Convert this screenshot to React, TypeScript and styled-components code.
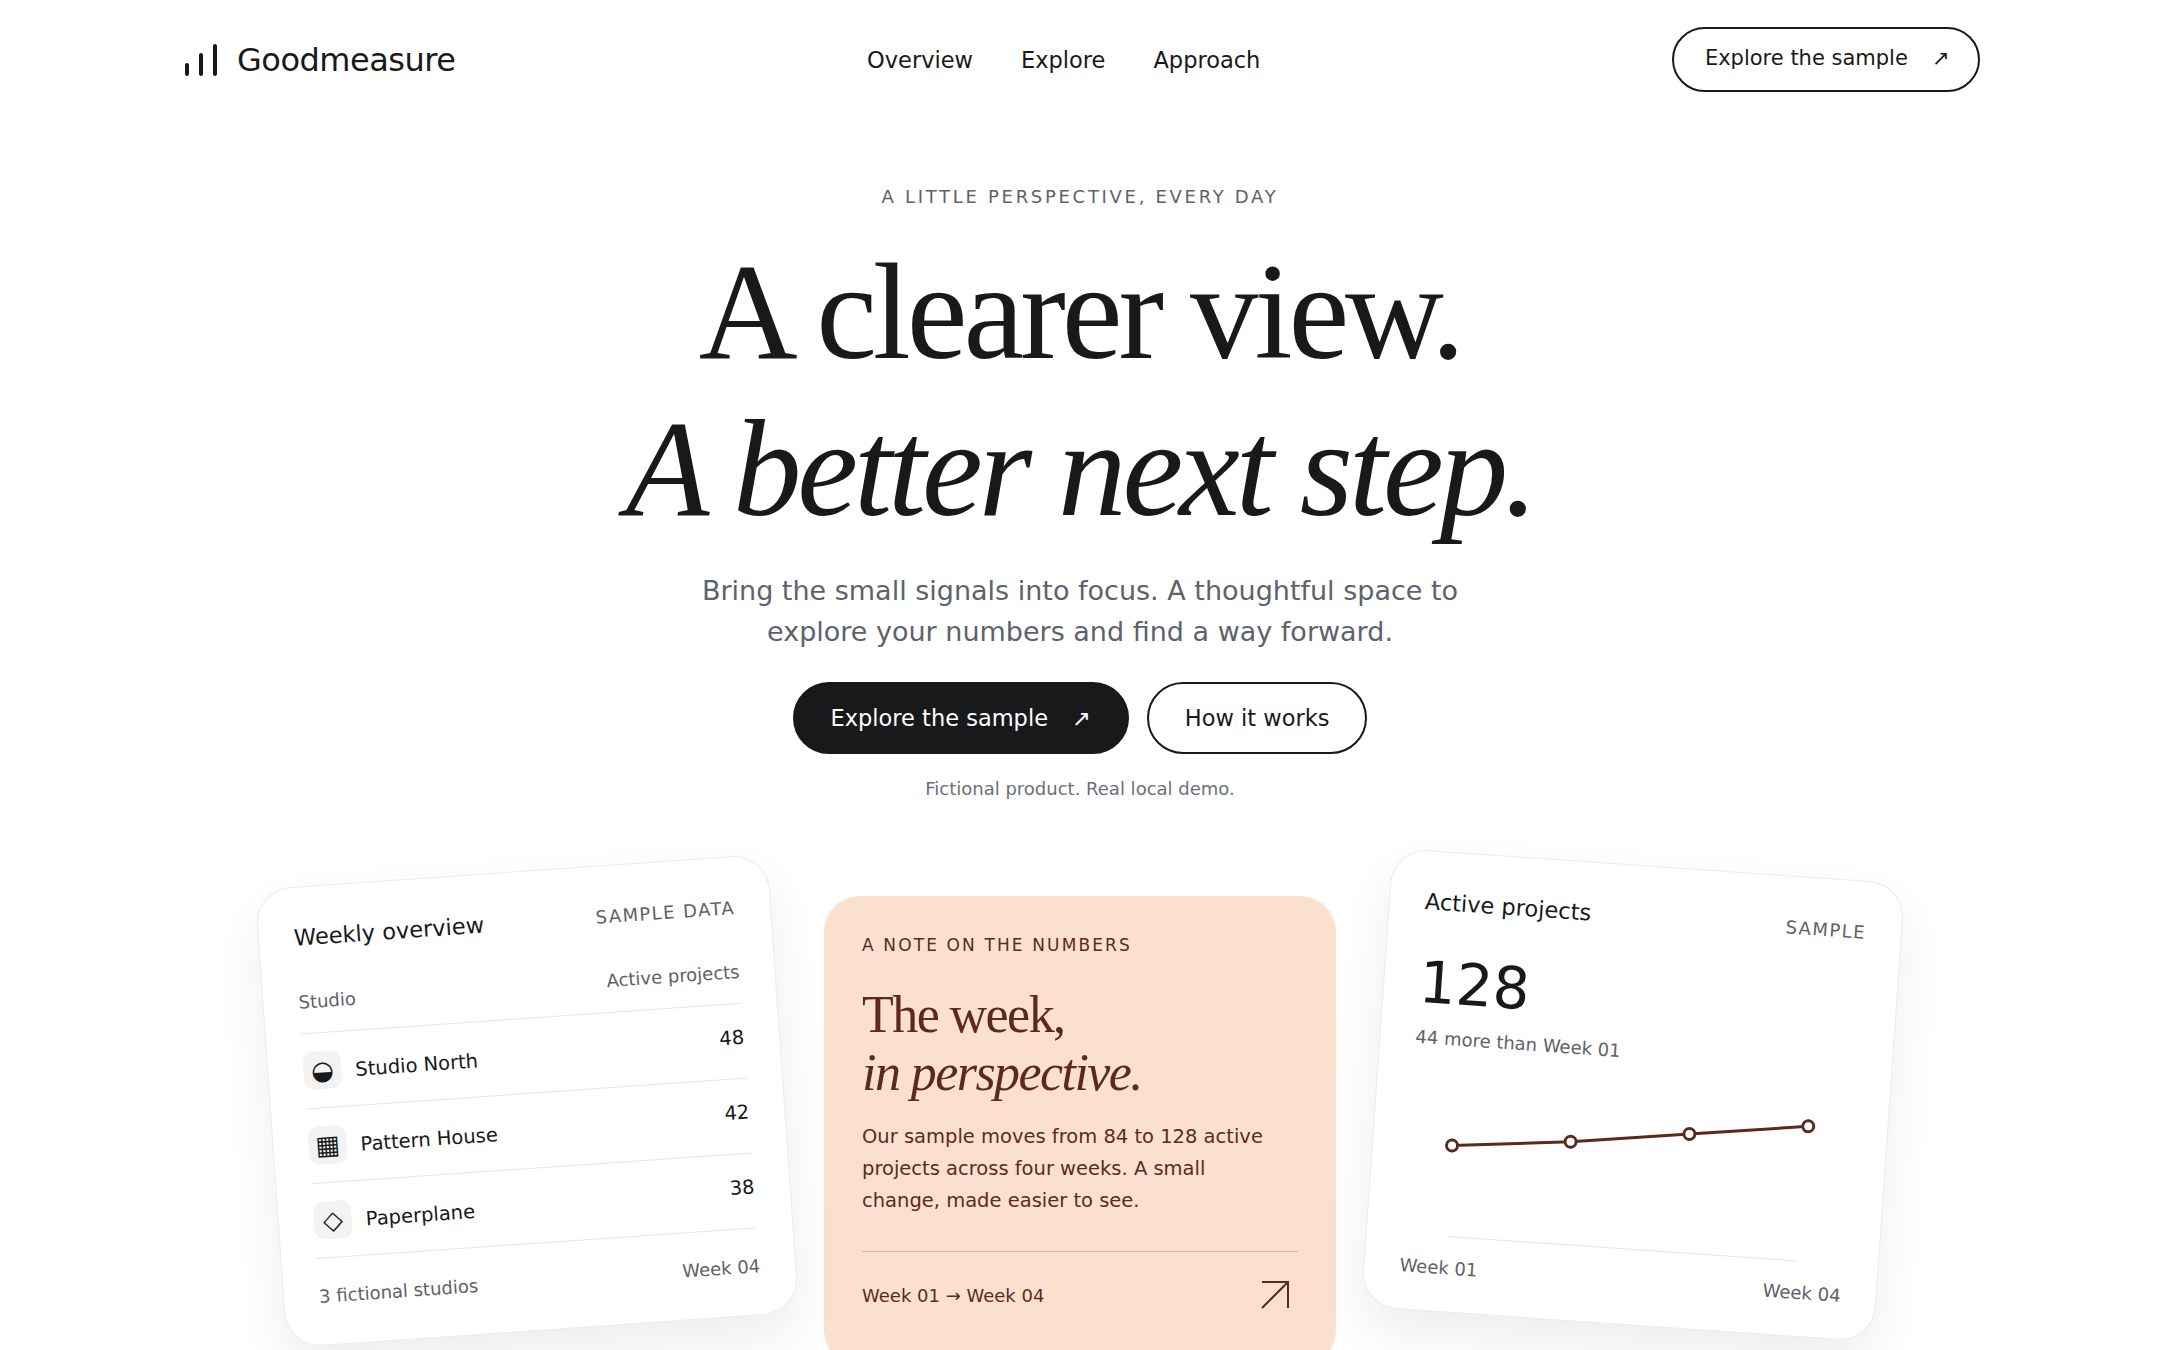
import React from 'react';
import styled, { createGlobalStyle } from 'styled-components';

const GlobalStyle = createGlobalStyle`
  html, body {
    margin: 0;
    padding: 0;
    background: #fff;
    color: #18191b;
    font-family: "DejaVu Sans", sans-serif;
  }
  * {
    box-sizing: border-box;
  }
`;

const Page = styled.div`
  height: 1350px;
  overflow: hidden;
`;

const Header = styled.header`
  display: flex;
  justify-content: space-between;
  align-items: center;
  height: 119px;
  padding: 0 180px 0 184px;
`;

const Brand = styled.div`
  display: flex;
  align-items: center;
  gap: 19px;
  font-size: 32px;
  letter-spacing: -0.015em;
`;

const Nav = styled.nav`
  display: flex;
  gap: 48px;
  font-size: 22.5px;
`;

const NavLink = styled.a`
  color: #18191b;
`;

const PillButton = styled.a<{ $dark?: boolean; $small?: boolean }>`
  display: inline-flex;
  align-items: center;
  gap: 24px;
  height: ${(p) => (p.$small ? '65px' : '72px')};
  padding: ${(p) => (p.$small ? '0 28.5px 3px 31px' : '0 36px')};
  border: 2px solid #18191b;
  border-radius: 999px;
  font-size: ${(p) => (p.$small ? '21px' : '22.5px')};
  background: ${(p) => (p.$dark ? '#18191b' : '#fff')};
  color: ${(p) => (p.$dark ? '#fff' : '#18191b')};
`;

const Hero = styled.section`
  display: flex;
  flex-direction: column;
  align-items: center;
  text-align: center;
`;

const Eyebrow = styled.p`
  margin: 66px 0 0;
  font-size: 18px;
  line-height: 24px;
  letter-spacing: 0.15em;
  color: #5d626c;
`;

const Title = styled.h1`
  margin: 25px 0 0;
  font-family: "Liberation Serif", serif;
  font-weight: 400;
  font-size: 137px;
  line-height: 157px;
  letter-spacing: -0.03em;
`;

const TitleLine = styled.span<{ $italic?: boolean }>`
  display: block;
  font-style: ${(p) => (p.$italic ? 'italic' : 'normal')};
`;

const Lead = styled.p`
  margin: 22px 0 0;
  width: 800px;
  font-size: 27px;
  line-height: 41px;
  color: #5d626c;
`;

const ButtonRow = styled.div`
  display: flex;
  gap: 18px;
  margin-top: 30px;
`;

const Disclaimer = styled.p`
  margin: 23px 0 0;
  font-size: 18px;
  line-height: 24px;
  color: #6b707a;
`;

const Cards = styled.section`
  display: grid;
  grid-template-columns: repeat(3, 512px);
  justify-content: center;
  gap: 41px;
  margin-top: 95px;
`;

const Card = styled.article<{ $tilt: number; $lift: number }>`
  height: 460px;
  margin: 0 -1px;
  padding: 37px 35px;
  background: #fff;
  border: 1px solid #ececec;
  border-radius: 36px;
  box-shadow: 0 24px 50px rgba(20, 20, 30, 0.07);
  transform: translateY(${(p) => p.$lift}px) rotate(${(p) => p.$tilt}deg);
`;

const CardHead = styled.div`
  display: flex;
  justify-content: space-between;
  align-items: center;
`;

const CardTitle = styled.h2`
  margin: 0;
  font-size: 22.5px;
  font-weight: 400;
`;

const Tag = styled.span`
  font-size: 18px;
  letter-spacing: 0.08em;
  color: #5d626c;
`;

const TableHead = styled.div`
  display: flex;
  justify-content: space-between;
  align-items: center;
  margin-top: 41px;
  padding-bottom: 21px;
  font-size: 18px;
  color: #5d626c;
  border-bottom: 1px solid #e6e6e6;
`;

const Row = styled.div`
  display: flex;
  align-items: center;
  gap: 14px;
  height: 75px;
  border-bottom: 1px solid #e6e6e6;
  font-size: 19.5px;
`;

const RowIcon = styled.span`
  display: flex;
  align-items: center;
  justify-content: center;
  width: 38px;
  height: 38px;
  border-radius: 10px;
  background: #f3f3f3;
  font-size: 26px;
`;

const RowName = styled.span`
  flex: 1;
  padding-top: 2px;
`;

const RowCount = styled.span`
  padding-bottom: 8px;
`;

const TableFoot = styled.div`
  display: flex;
  justify-content: space-between;
  align-items: center;
  margin-top: 27px;
  font-size: 18px;
  color: #5d626c;
`;

const NoteCard = styled.article`
  height: 470px;
  padding: 37px 38px;
  border-radius: 36px;
  background: #fbe0d0;
  color: #5c2a1c;
`;

const NoteEyebrow = styled.p`
  margin: 0;
  font-size: 17px;
  line-height: 24px;
  letter-spacing: 0.125em;
`;

const NoteTitle = styled.h2`
  margin: 29px 0 0;
  font-family: "Liberation Serif", serif;
  font-weight: 400;
  font-size: 52px;
  line-height: 58px;
  letter-spacing: -0.03em;
`;

const NoteBody = styled.p`
  margin: 19px 0 0;
  max-width: 410px;
  font-size: 19.5px;
  line-height: 32px;
`;

const NoteFoot = styled.div`
  display: flex;
  justify-content: space-between;
  align-items: center;
  margin-top: 34px;
  padding: 29px 9px 0 0;
  border-top: 1px solid #d9b8a8;
  font-size: 18px;
`;

const BigNumber = styled.div`
  margin-top: 29px;
  font-size: 58px;
  line-height: 78px;
`;

const Delta = styled.p`
  margin: 5px 0 0;
  font-size: 18px;
  color: #5d626c;
`;

const ChartBox = styled.svg`
  display: block;
  width: 440px;
  height: 160px;
  margin-top: 34px;
`;

const AxisRow = styled.div`
  display: flex;
  justify-content: space-between;
  margin-top: 14px;
  font-size: 18px;
  color: #5d626c;
`;

const points = [
  { x: 44, y: 62 },
  { x: 162, y: 50 },
  { x: 280, y: 34 },
  { x: 398, y: 18 },
];

const studios = [
  { icon: '◒', name: 'Studio North', count: 48 },
  { icon: '▦', name: 'Pattern House', count: 42 },
  { icon: '◇', name: 'Paperplane', count: 38 },
];

function BrandMark() {
  return (
    <svg width="34" height="34" viewBox="0 0 34 34" fill="none" stroke="#18191b" strokeWidth="4" strokeLinecap="round">
      <path d="M3 31V22M17 31V12M31 31V3" />
    </svg>
  );
}

function BigArrow() {
  return (
    <svg width="28" height="28" viewBox="0 0 28 28" fill="none" stroke="#5c2a1c" strokeWidth="2">
      <path d="M1 1H27V27M27 1L1 27" />
    </svg>
  );
}

function App() {
  return (
    <Page>
      <GlobalStyle />
      <Header>
        <Brand>
          <BrandMark />
          Goodmeasure
        </Brand>
        <Nav>
          <NavLink>Overview</NavLink>
          <NavLink>Explore</NavLink>
          <NavLink>Approach</NavLink>
        </Nav>
        <PillButton $small>
          Explore the sample <span>↗</span>
        </PillButton>
      </Header>

      <Hero>
        <Eyebrow>A LITTLE PERSPECTIVE, EVERY DAY</Eyebrow>
        <Title>
          <TitleLine>A clearer view.</TitleLine>
          <TitleLine $italic>A better next step.</TitleLine>
        </Title>
        <Lead>Bring the small signals into focus. A thoughtful space to explore your numbers and find a way forward.</Lead>
        <ButtonRow>
          <PillButton $dark>
            Explore the sample <span>↗</span>
          </PillButton>
          <PillButton>How it works</PillButton>
        </ButtonRow>
        <Disclaimer>Fictional product. Real local demo.</Disclaimer>
      </Hero>

      <Cards>
        <Card $tilt={-4} $lift={-25}>
          <CardHead>
            <CardTitle>Weekly overview</CardTitle>
            <Tag>SAMPLE DATA</Tag>
          </CardHead>
          <TableHead>
            <span>Studio</span>
            <span>Active projects</span>
          </TableHead>
          {studios.map((s) => (
            <Row key={s.name}>
              <RowIcon>{s.icon}</RowIcon>
              <RowName>{s.name}</RowName>
              <RowCount>{s.count}</RowCount>
            </Row>
          ))}
          <TableFoot>
            <span>3 fictional studios</span>
            <span>Week 04</span>
          </TableFoot>
        </Card>

        <NoteCard>
          <NoteEyebrow>A NOTE ON THE NUMBERS</NoteEyebrow>
          <NoteTitle>
            The week,
            <TitleLine $italic>in perspective.</TitleLine>
          </NoteTitle>
          <NoteBody>Our sample moves from 84 to 128 active projects across four weeks. A small change, made easier to see.</NoteBody>
          <NoteFoot>
            <span>Week 01 → Week 04</span>
            <BigArrow />
          </NoteFoot>
        </NoteCard>

        <Card $tilt={4} $lift={-31}>
          <CardHead>
            <CardTitle>Active projects</CardTitle>
            <Tag>SAMPLE</Tag>
          </CardHead>
          <BigNumber>128</BigNumber>
          <Delta>44 more than Week 01</Delta>
          <ChartBox viewBox="0 0 440 160">
            <polyline points={points.map((p) => `${p.x},${p.y}`).join(' ')} fill="none" stroke="#5c2a1c" strokeWidth="3" />
            {points.map((p) => (
              <circle key={p.x} cx={p.x} cy={p.y} r="5.5" fill="#fff" stroke="#5c2a1c" strokeWidth="3" />
            ))}
            <line x1="46" y1="153" x2="397" y2="153" stroke="#e6e6e6" />
          </ChartBox>
          <AxisRow>
            <span>Week 01</span>
            <span>Week 04</span>
          </AxisRow>
        </Card>
      </Cards>
    </Page>
  );
}

export default App;
